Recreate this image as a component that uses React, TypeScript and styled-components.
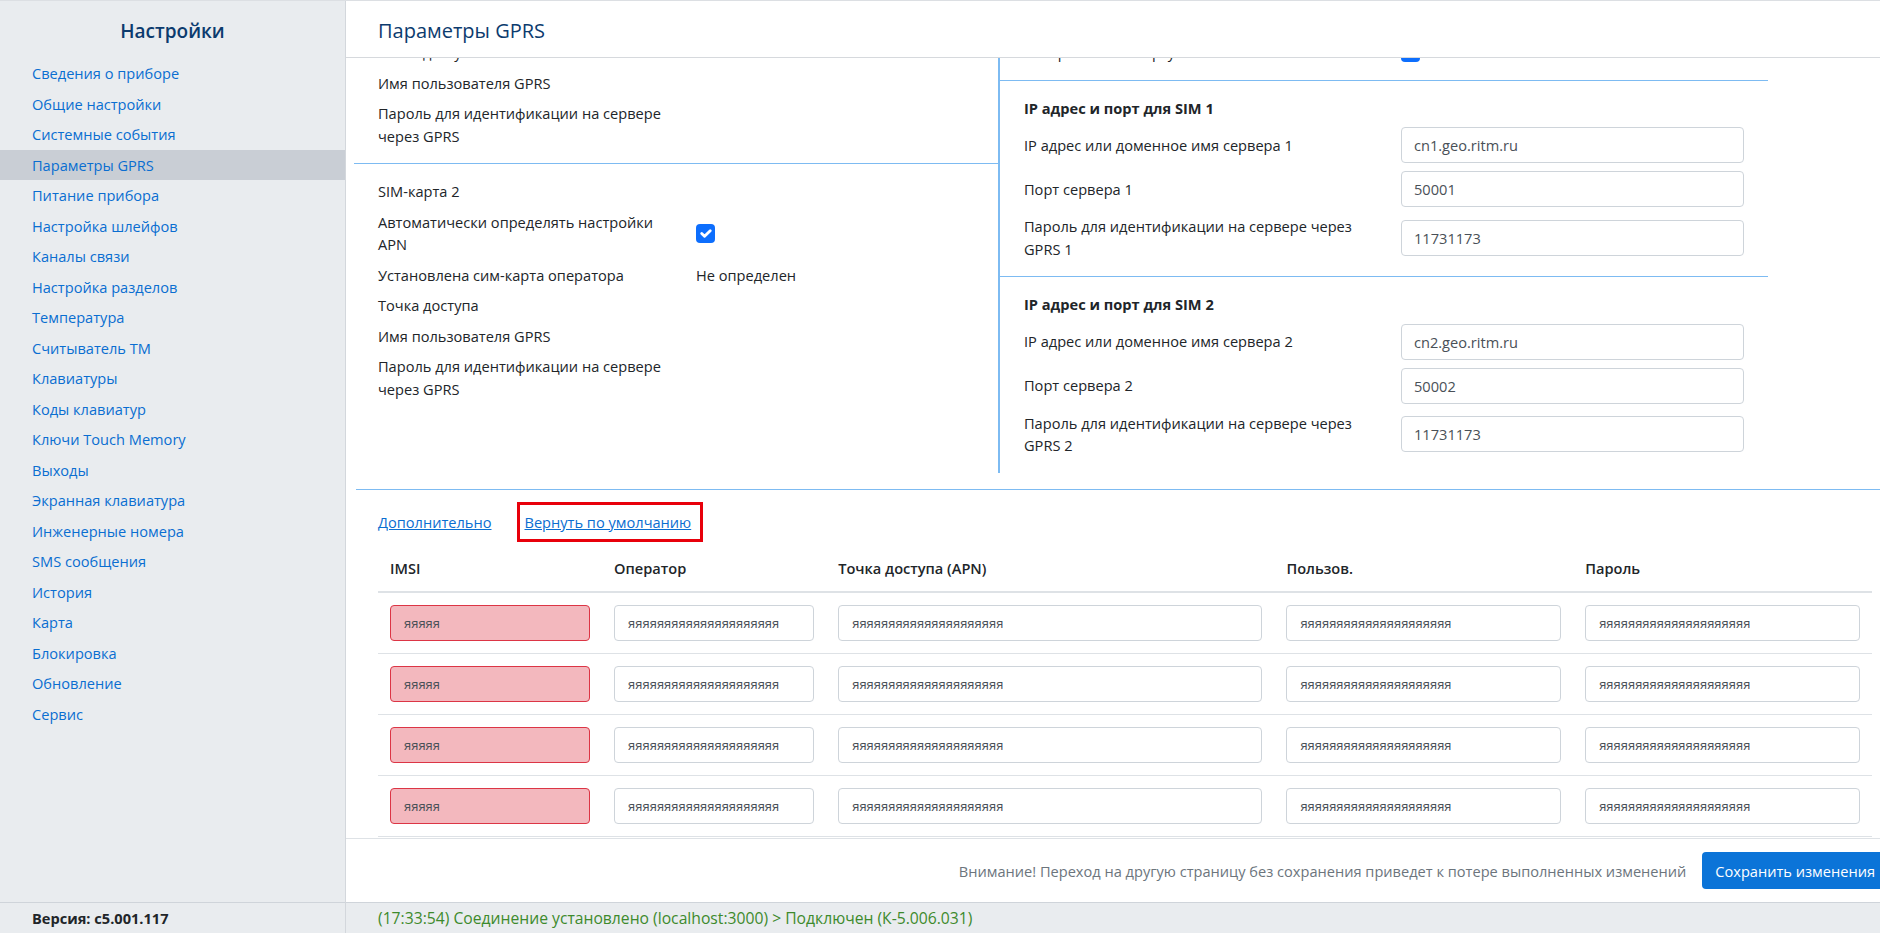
import * as React from 'react';
import styled, { createGlobalStyle, css } from 'styled-components';

const FONT = `'Open Sans', 'Noto Sans', 'DejaVu Sans', sans-serif`;

const navy = '#0c3b6e';
const link = '#0a6ed1';
const sep = '#7dbbf2';
const grey = '#dee2e6';

const GlobalStyle = createGlobalStyle`
  html, body {
    margin: 0;
    padding: 0;
    height: 100%;
    overflow: hidden;
  }

  body {
    background: #fff;
    color: #212529;
    font-family: ${FONT};
    font-size: 14.6px;
  }

  * {
    box-sizing: border-box;
  }
`;

const Page = styled.div`
  border-top: 1px solid #dcdfe3;
  display: flex;
  height: 100vh;
  overflow: hidden;
`;

const Sidebar = styled.aside`
  background: #e9ecef;
  border-right: 1px solid #d3d7dc;
  display: flex;
  flex: none;
  flex-direction: column;
  width: 346px;
`;

const SidebarTitle = styled.h1`
  align-items: center;
  color: ${navy};
  display: flex;
  font-size: 19px;
  font-weight: 600;
  height: 57px;
  justify-content: center;
  margin: 0;
  padding-top: 3px;
`;

const Nav = styled.nav`
  display: flex;
  flex: 1;
  flex-direction: column;
`;

const NavItem = styled.a<{ $active?: boolean }>`
  color: ${link};
  cursor: pointer;
  line-height: 22.5px;
  padding: 4px 32px;
  text-decoration: none;

  ${(p) =>
    p.$active &&
    css`
      background: #c9ced5;
    `}
`;

const Version = styled.div`
  align-items: center;
  border-top: 1px solid #cfd4da;
  display: flex;
  flex: none;
  font-weight: 700;
  height: 31px;
  padding-left: 32px;
`;

const Main = styled.main`
  display: flex;
  flex: none;
  flex-direction: column;
  min-height: 0;
  width: 1542px;
`;

const Header = styled.header`
  align-items: center;
  border-bottom: 1px solid #d6d9dd;
  color: ${navy};
  display: flex;
  flex: none;
  font-size: 20px;
  height: 57px;
  padding: 3px 32px 0;
`;

const ScrollArea = styled.div`
  flex: 1;
  min-height: 0;
  overflow: hidden;
`;

const Columns = styled.div`
  display: flex;
  margin-left: 8px;
`;

const LeftCol = styled.div`
  flex: none;
  width: 644px;
`;

const RightCol = styled.div`
  border-left: 2px solid ${sep};
  flex: none;
  width: 770px;
`;

const Block = styled.section<{ $last?: boolean }>`
  border-bottom: ${(p) => (p.$last ? 'none' : `1px solid ${sep}`)};
  padding: 12px 0;
`;

const InfoRow = styled.div`
  align-items: center;
  column-gap: 18px;
  display: grid;
  grid-template-columns: 300px 1fr;
  line-height: 22.5px;
  padding: 4px 24px;
`;

const FieldRow = styled.div`
  align-items: center;
  column-gap: 12px;
  display: grid;
  grid-template-columns: 365px 343px;
  line-height: 22.5px;
  padding: 4px 24px;
`;

const BlockTitle = styled.div`
  font-weight: 700;
  line-height: 22.5px;
  padding: 4px 24px;
`;

const CheckCell = styled.span`
  align-items: center;
  display: flex;
  height: 22.5px;
`;

const Box = styled.span`
  align-items: center;
  background: #0d6efd;
  border-radius: 4px;
  display: flex;
  height: 19px;
  justify-content: center;
  width: 19px;
`;

const TextInput = styled.input`
  background: #fff;
  border: 1px solid #ced4da;
  border-radius: 4px;
  color: #495057;
  font-family: ${FONT};
  font-size: 14.6px;
  height: 36px;
  outline: none;
  padding: 0 12px;
  width: 100%;
`;

const Divider = styled.hr`
  border: none;
  border-top: 1px solid ${sep};
  margin: 16px 0 0 10px;
`;

const LinksRow = styled.div`
  align-items: center;
  display: flex;
  gap: 25px;
  padding: 12px 32px 0;
`;

const Link = styled.a`
  color: ${link};
  cursor: pointer;
  line-height: 22.5px;
  text-decoration: underline;
`;

const Marked = styled.span`
  border: 3px solid #e8000b;
  display: inline-flex;
  padding: 6px 9px 6px 5px;
`;

const Table = styled.table`
  border-collapse: collapse;
  margin: 4px 16px 0 32px;
  table-layout: fixed;
  width: 1494px;
`;

const Th = styled.th`
  border-bottom: 2px solid ${grey};
  font-weight: 600;
  line-height: 22.5px;
  padding: 11px 12px;
  text-align: left;
`;

const Td = styled.td`
  border-bottom: 1px solid ${grey};
  padding: 12px;
`;

const CellInput = styled.input<{ $invalid?: boolean }>`
  background: #fff;
  border: 1px solid #ced4da;
  border-radius: 4px;
  color: #495057;
  display: block;
  font-family: ${FONT};
  font-size: 13px;
  height: 36px;
  outline: none;
  padding: 0 13px;
  width: 100%;

  ${(p) =>
    p.$invalid &&
    css`
      background: #f3b8be;
      border-color: #dc3545;
    `}
`;

const Footer = styled.footer`
  align-items: center;
  border-top: 1px solid ${grey};
  display: flex;
  flex: none;
  gap: 16px;
  height: 64px;
  justify-content: flex-end;
`;

const Warning = styled.span`
  color: #6c757d;
`;

const SaveButton = styled.button`
  background: #0b74d8;
  border: none;
  border-radius: 4px;
  color: #fff;
  font-family: ${FONT};
  font-size: 14.6px;
  height: 37px;
  padding: 0 13px;
`;

const StatusBar = styled.div`
  align-items: center;
  background: #e9ecef;
  border-top: 1px solid #cfd4da;
  color: #3d8a2c;
  display: flex;
  flex: none;
  font-size: 15.7px;
  height: 31px;
  padding-left: 32px;
`;

const menu = [
  'Сведения о приборе',
  'Общие настройки',
  'Системные события',
  'Параметры GPRS',
  'Питание прибора',
  'Настройка шлейфов',
  'Каналы связи',
  'Настройка разделов',
  'Температура',
  'Считыватель ТМ',
  'Клавиатуры',
  'Коды клавиатур',
  'Ключи Touch Memory',
  'Выходы',
  'Экранная клавиатура',
  'Инженерные номера',
  'SMS сообщения',
  'История',
  'Карта',
  'Блокировка',
  'Обновление',
  'Сервис',
];

const Check = () => (
  <CheckCell>
    <Box>
      <svg width="19" height="19" viewBox="0 0 20 20">
        <path
          d="m6 10 3 3 6-6"
          fill="none"
          stroke="#fff"
          strokeLinecap="round"
          strokeLinejoin="round"
          strokeWidth="3"
        />
      </svg>
    </Box>
  </CheckCell>
);

const SimBlock = ({ n, last }: { n: number; last?: boolean }) => (
  <Block $last={last}>
    <InfoRow>
      <span>SIM-карта {n}</span>
    </InfoRow>
    <InfoRow>
      <span>Автоматически определять настройки APN</span>
      <Check />
    </InfoRow>
    <InfoRow>
      <span>Установлена сим-карта оператора</span>
      <span>Не определен</span>
    </InfoRow>
    <InfoRow>
      <span>Точка доступа</span>
    </InfoRow>
    <InfoRow>
      <span>Имя пользователя GPRS</span>
    </InfoRow>
    <InfoRow>
      <span>Пароль для идентификации на сервере через GPRS</span>
    </InfoRow>
  </Block>
);

const ServerBlock = ({ n, host, port, last }: { n: number; host: string; port: string; last?: boolean }) => (
  <Block $last={last}>
    <BlockTitle>IP адрес и порт для SIM {n}</BlockTitle>
    <FieldRow>
      <span>IP адрес или доменное имя сервера {n}</span>
      <TextInput readOnly value={host} />
    </FieldRow>
    <FieldRow>
      <span>Порт сервера {n}</span>
      <TextInput readOnly value={port} />
    </FieldRow>
    <FieldRow>
      <span>Пароль для идентификации на сервере через GPRS {n}</span>
      <TextInput readOnly value="11731173" />
    </FieldRow>
  </Block>
);

const filler = 'яяяяяяяяяяяяяяяяяяяяя';

const App = (): JSX.Element => {
  const scrollRef = React.useRef<HTMLDivElement>(null);

  React.useLayoutEffect(() => {
    if (scrollRef.current) scrollRef.current.scrollTop = 147;
  }, []);

  return (
    <>
      <GlobalStyle />
      <Page>
        <Sidebar>
          <SidebarTitle>Настройки</SidebarTitle>
          <Nav>
            {menu.map((item) => (
              <NavItem key={item} $active={item === 'Параметры GPRS'}>
                {item}
              </NavItem>
            ))}
          </Nav>
          <Version>Версия: c5.001.117</Version>
        </Sidebar>
        <Main>
          <Header>Параметры GPRS</Header>
          <ScrollArea ref={scrollRef}>
            <Columns>
              <LeftCol>
                <SimBlock n={1} />
                <SimBlock n={2} last />
              </LeftCol>
              <RightCol>
                <Block>
                  <BlockTitle>Общие параметры</BlockTitle>
                  <FieldRow>
                    <span>Резервирование SIM-карт</span>
                    <Check />
                  </FieldRow>
                  <FieldRow>
                    <span>Переключаться на резервную SIM-карту при отсутствии связи с сервером</span>
                    <Check />
                  </FieldRow>
                  <FieldRow>
                    <span>Возврат на SIM-карту 1</span>
                    <Check />
                  </FieldRow>
                </Block>
                <ServerBlock n={1} host="cn1.geo.ritm.ru" port="50001" />
                <ServerBlock n={2} host="cn2.geo.ritm.ru" port="50002" last />
              </RightCol>
            </Columns>
            <Divider />
            <LinksRow>
              <Link>Дополнительно</Link>
              <Marked>
                <Link>Вернуть по умолчанию</Link>
              </Marked>
            </LinksRow>
            <Table>
              <colgroup>
                <col style={{ width: '15%' }} />
                <col style={{ width: '15%' }} />
                <col style={{ width: '30%' }} />
                <col style={{ width: '20%' }} />
                <col style={{ width: '20%' }} />
              </colgroup>
              <thead>
                <tr>
                  <Th>IMSI</Th>
                  <Th>Оператор</Th>
                  <Th>Точка доступа (APN)</Th>
                  <Th>Пользов.</Th>
                  <Th>Пароль</Th>
                </tr>
              </thead>
              <tbody>
                {[0, 1, 2, 3, 4, 5].map((i) => (
                  <tr key={i}>
                    <Td>
                      <CellInput $invalid readOnly value="яяяяя" />
                    </Td>
                    <Td>
                      <CellInput readOnly value={filler} />
                    </Td>
                    <Td>
                      <CellInput readOnly value={filler} />
                    </Td>
                    <Td>
                      <CellInput readOnly value={filler} />
                    </Td>
                    <Td>
                      <CellInput readOnly value={filler} />
                    </Td>
                  </tr>
                ))}
              </tbody>
            </Table>
          </ScrollArea>
          <Footer>
            <Warning>
              Внимание! Переход на другую страницу без сохранения приведет к потере выполненных изменений
            </Warning>
            <SaveButton>Сохранить изменения</SaveButton>
          </Footer>
          <StatusBar>(17:33:54) Соединение установлено (localhost:3000) &gt; Подключен (К-5.006.031)</StatusBar>
        </Main>
      </Page>
    </>
  );
};

export default App;
